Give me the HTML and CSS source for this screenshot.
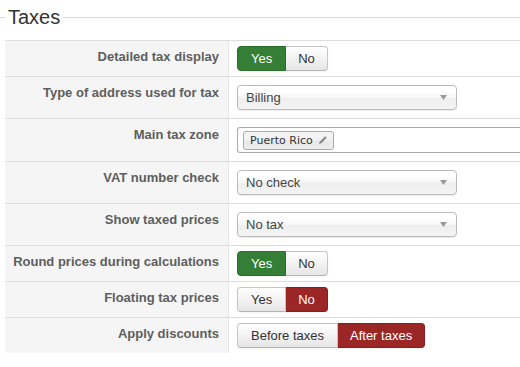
FILE: index.html
```html
<!DOCTYPE html>
<html lang="en">
<head>
    <meta charset="UTF-8">
    <title>Taxes</title>
    <link rel="stylesheet" href="styles.css">
</head>
<body>
<fieldset class="taxes">
    <legend>Taxes</legend>
    <div class="params">
        <div class="row">
            <div class="key">Detailed tax display</div>
            <div class="val btns">
                <div class="group">
                    <span class="btn on-yes">Yes</span>
                    <span class="btn">No</span>
                </div>
            </div>
        </div>
        <div class="row">
            <div class="key">Type of address used for tax</div>
            <div class="val sel">
                <div class="select">
                    <span>Billing</span>
                    <svg class="arrow" width="7" height="5" viewBox="0 0 7 5"><path d="M0 0 H7 L3.5 5 Z" fill="#999"/></svg>
                </div>
            </div>
        </div>
        <div class="row">
            <div class="key">Main tax zone</div>
            <div class="val tagrow">
                <div class="multi">
                    <span class="tag">Puerto Rico
                        <svg class="pen" width="10" height="10" viewBox="0 0 10 10"><path d="M1 9 L1.8 6.6 L7.2 1.2 L8.8 2.8 L3.4 8.2 Z" fill="#8a8a8a"/></svg>
                    </span>
                </div>
            </div>
        </div>
        <div class="row">
            <div class="key">VAT number check</div>
            <div class="val sel">
                <div class="select">
                    <span>No check</span>
                    <svg class="arrow" width="7" height="5" viewBox="0 0 7 5"><path d="M0 0 H7 L3.5 5 Z" fill="#999"/></svg>
                </div>
            </div>
        </div>
        <div class="row">
            <div class="key">Show taxed prices</div>
            <div class="val sel">
                <div class="select">
                    <span>No tax</span>
                    <svg class="arrow" width="7" height="5" viewBox="0 0 7 5"><path d="M0 0 H7 L3.5 5 Z" fill="#999"/></svg>
                </div>
            </div>
        </div>
        <div class="row">
            <div class="key">Round prices during calculations</div>
            <div class="val btns">
                <div class="group">
                    <span class="btn on-yes">Yes</span>
                    <span class="btn">No</span>
                </div>
            </div>
        </div>
        <div class="row">
            <div class="key">Floating tax prices</div>
            <div class="val btns">
                <div class="group">
                    <span class="btn">Yes</span>
                    <span class="btn on-no">No</span>
                </div>
            </div>
        </div>
        <div class="row">
            <div class="key">Apply discounts</div>
            <div class="val btns">
                <div class="group">
                    <span class="btn">Before taxes</span>
                    <span class="btn on-no">After taxes</span>
                </div>
            </div>
        </div>
    </div>
</fieldset>
</body>
</html>
```

FILE: styles.css
```css
body {
    margin: 0;
    padding: 5px 0 0;
    background: #fff;
    font-family: "Liberation Sans", Arial, sans-serif;
    font-size: 13px;
    color: #333;
    overflow: hidden;
}

.taxes {
    margin: 0;
    padding: 0 0 0 5px;
    border: none;
    border-top: 1px solid #ddd;
    min-width: 0;
}

.taxes legend {
    margin-left: 0;
    padding: 0 3px;
    font-size: 20px;
    line-height: 24px;
    color: #333;
}

.params {
    margin-top: 11px;
}

.row {
    display: flex;
    border-top: 1px solid #ddd;
}

.key {
    width: 224px;
    box-sizing: border-box;
    flex: none;
    background: #f5f5f5;
    border-right: 1px solid #e6e6e6;
    padding: 7px 9px 0 0;
    text-align: right;
    font-weight: bold;
    line-height: 18px;
    color: #5e5e5e;
}

.val {
    padding: 5px 8px;
}

.val.sel {
    padding: 8px 8px;
}

.val.tagrow {
    flex: 1;
    padding: 8px 0 8px 8px;
}

/* yes / no groups */
.group {
    display: flex;
}

.btn {
    display: block;
    height: 25px;
    box-sizing: border-box;
    padding: 3px 12px;
    line-height: 17px;
    border: 1px solid #c5c5c5;
    border-bottom-color: #b3b3b3;
    background: linear-gradient(#ffffff, #e6e6e6);
    color: #333;
    box-shadow: 0 1px 2px rgba(0, 0, 0, .05);
}

.btn + .btn {
    border-left: none;
}

.btn:first-child {
    border-radius: 4px 0 0 4px;
    padding-left: 13px;
    padding-right: 13px;
}

.btn:last-child {
    border-radius: 0 4px 4px 0;
}

.btn.on-yes {
    background: #347f35;
    border-color: #2c6e2d;
    color: #fff;
}

.btn.on-no {
    background: #9b2626;
    border-color: #862020;
    color: #fff;
}

/* chosen style select */
.select {
    width: 220px;
    height: 25px;
    box-sizing: border-box;
    display: flex;
    align-items: center;
    justify-content: space-between;
    padding: 0 9px 0 8px;
    border: 1px solid #bbb;
    border-radius: 4px;
    background: linear-gradient(#fff 20%, #f6f6f6 50%, #eee 52%, #f4f4f4 100%);
    box-shadow: 0 1px 1px rgba(0, 0, 0, .08);
    color: #444;
}

.multi {
    height: 26px;
    box-sizing: border-box;
    border: 1px solid #aaa;
    border-right: none;
    border-radius: 3px 0 0 3px;
    background: #fff;
    padding: 2px 5px;
    display: flex;
    align-items: center;
}

.tag {
    display: flex;
    align-items: center;
    gap: 5px;
    height: 19px;
    box-sizing: border-box;
    padding: 0 5px 0 6px;
    border: 1px solid #aaa;
    border-radius: 3px;
    background: linear-gradient(#f4f4f4 20%, #f0f0f0 50%, #e8e8e8 52%, #eee 100%);
    font-family: "DejaVu Sans", Verdana, sans-serif;
    font-size: 11px;
    color: #333;
}
```
